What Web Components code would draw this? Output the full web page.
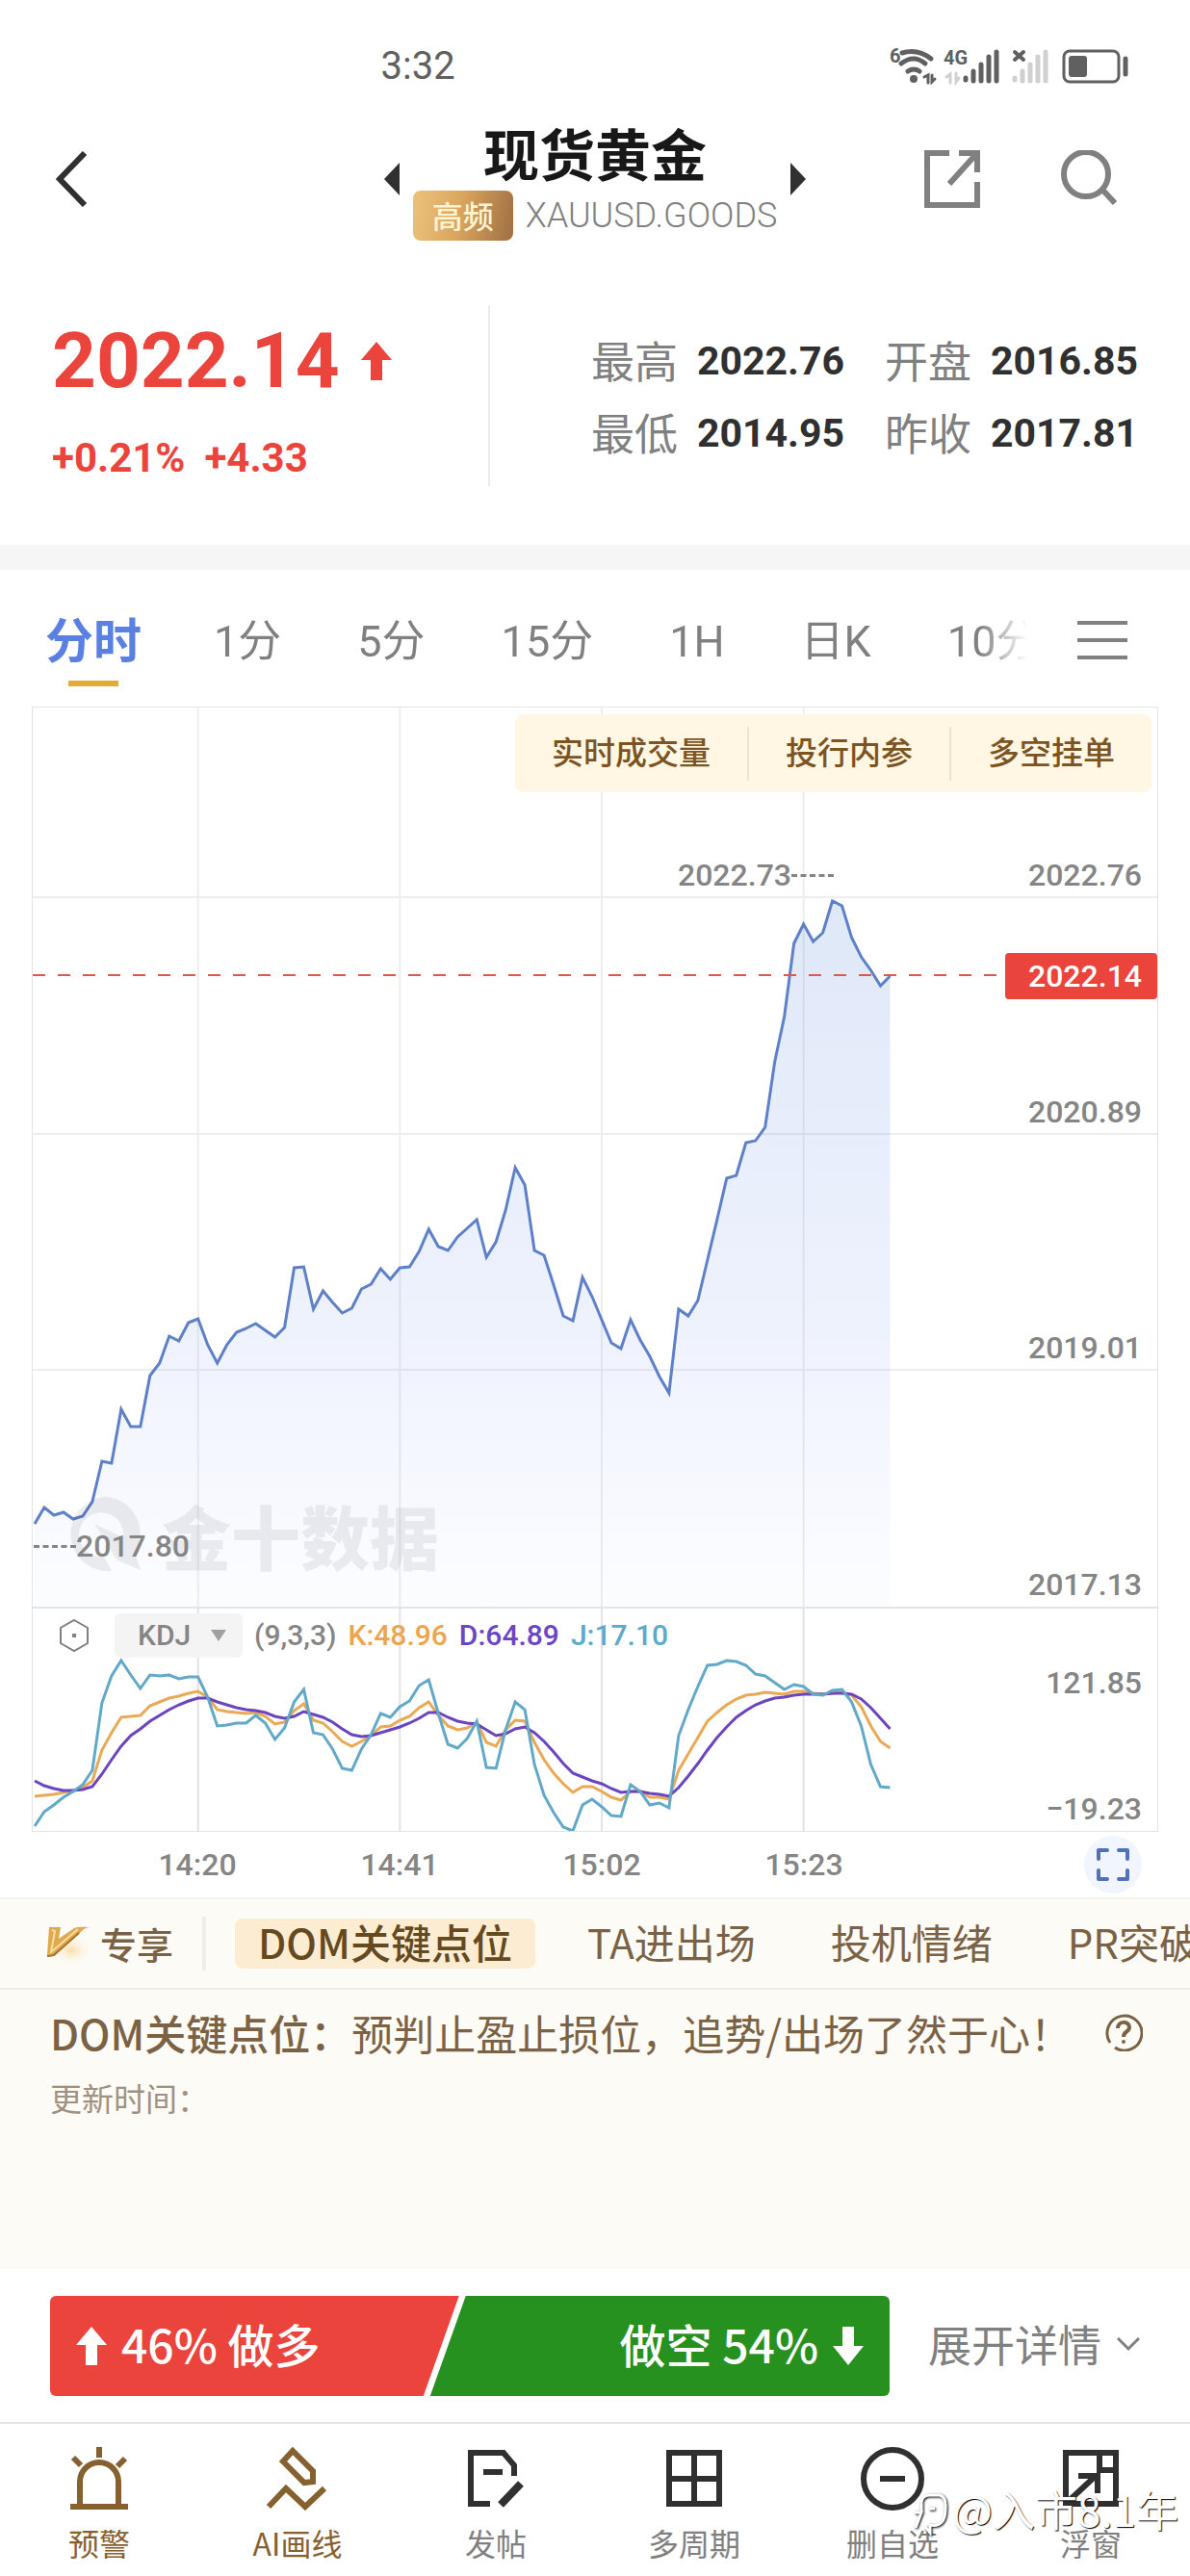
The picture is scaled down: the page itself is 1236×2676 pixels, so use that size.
<!DOCTYPE html>
<html lang="zh-CN">
<head>
<meta charset="UTF-8">
<meta name="viewport" content="width=device-width, initial-scale=1">
<title>现货黄金 XAUUSD.GOODS</title>
<style>
    body {
        margin: 0;
        background: #fff;
        color: #808080;
        font-family: Roboto, "Noto Sans CJK SC", sans-serif;
        --num: Roboto, sans-serif;
        --cjk: "Noto Sans CJK SC", sans-serif;
        --red: #eb443d;
        --green: #27911f;
        --ink: #303030;
        --brown: #86602e;
    }
</style>
</head>
<body>
<quote-page></quote-page>

<script>
const resetCss = `
    * { box-sizing: border-box; }
    button, select { margin: 0; padding: 0; border: 0; background: none; font: inherit; color: inherit; cursor: pointer; }
    svg { display: block; }
`;

// one y per minute, in plot units of the price panel
const prices = [
    848, 831, 839, 836, 843, 840, 825, 783, 785, 729, 747, 747, 694, 681, 653, 658, 639, 635,
    662, 681, 662, 649, 645, 640, 647, 654, 644, 582, 581, 625, 606, 618, 629, 624, 604, 599,
    583, 594, 582, 581, 565, 542, 560, 564, 550, 541, 532, 571, 555, 522, 478, 496, 564, 569,
    600, 632, 637, 592, 612, 636, 660, 666, 636, 657, 674, 695, 712, 625, 632, 616, 574, 532,
    489, 486, 452, 450, 436, 368, 321, 245, 225, 243, 234, 201, 206, 239, 259, 273, 289, 279
];

// KDJ values use a scale three times finer than the panel
const kdj = {
    k: [
        617, 614, 611, 607, 600, 590, 570, 475, 420, 372, 369, 367, 337, 325, 313, 307, 297, 290,
        310, 348, 354, 358, 361, 357, 369, 393, 387, 350, 331, 382, 391, 416, 448, 463, 446, 429,
        402, 400, 382, 368, 343, 323, 367, 400, 412, 406, 387, 450, 461, 412, 382, 384, 450, 503,
        545, 580, 605, 587, 588, 604, 620, 631, 602, 603, 620, 622, 627, 538, 487, 435, 384, 357,
        332, 315, 303, 301, 295, 296, 299, 291, 290, 297, 299, 296, 294, 303, 340, 400, 447, 468
    ],
    d: [
        570, 584, 594, 599, 600, 597, 588, 549, 505, 461, 430, 408, 385, 365, 348, 334, 321, 311,
        311, 323, 334, 342, 349, 351, 356, 369, 375, 368, 355, 364, 373, 387, 408, 426, 431, 430,
        420, 412, 402, 391, 375, 357, 358, 373, 385, 391, 393, 412, 428, 424, 409, 402, 419, 448,
        480, 515, 545, 559, 570, 579, 593, 606, 602, 603, 608, 612, 619, 592, 556, 515, 473, 434,
        401, 373, 350, 333, 321, 312, 308, 303, 299, 299, 299, 297, 296, 300, 314, 343, 376, 407
    ],
    j: [
        711, 667, 645, 620, 602, 583, 536, 328, 243, 196, 240, 282, 239, 244, 241, 251, 246, 246,
        310, 399, 397, 389, 391, 367, 390, 442, 405, 323, 284, 419, 427, 470, 530, 538, 470, 427,
        360, 372, 340, 320, 272, 256, 360, 456, 467, 438, 383, 529, 530, 410, 323, 348, 520, 616,
        670, 713, 727, 644, 628, 651, 677, 682, 583, 602, 644, 639, 655, 428, 348, 277, 209, 207,
        194, 199, 210, 238, 244, 263, 284, 270, 276, 299, 304, 288, 286, 325, 400, 520, 589, 591
    ]
};

const toPoints = (values, scale = (v) => v) =>
    values.map((v, i) => `${2 + i * 10},${scale(v)}`).join(' ');

const kdjPoints = (values) => toPoints(values, (v) => Math.round(v / 3) - 11);

function register(name, html) {
    const template = document.createElement('template');
    template.innerHTML = html.replace('<style>', '<style>' + resetCss);
    customElements.define(name, class extends HTMLElement {
        constructor() {
            super();
            this.attachShadow({mode: 'open'});
            this.shadowRoot.appendChild(template.content.cloneNode(true));
        }
    });
}

register('status-bar', `
<style>
    :host {
        display: flex;
        justify-content: space-between;
        align-items: center;
        height: 120px;
        padding: 16px 63px 0 32%;
        color: #606060;
        font-size: 40px;
    }
    text { font-family: var(--num); font-size: 20px; font-weight: bold; }
</style>
<span>3:32</span>
<svg width="250" height="42" viewBox="924 47 250 42" fill="none" stroke="#606060" stroke-width="5" stroke-linecap="round" aria-hidden="true">
    <text x="925" y="65" fill="#606060" stroke="none">6</text>
    <path d="M938 55q16-5 30 6M937 66q13-10 25 0M944 74q6-4 12 0"/>
    <circle cx="950" cy="82" r="4" fill="#606060" stroke="none"/>
    <path d="M961 80l4-2v8M969 78v7l3-3" stroke-width="3"/>
    <text x="981" y="67" fill="#606060" stroke="none">4G</text>
    <path d="M984 80l4-3v9M994 76v9l3-4" stroke="#d0d0d0" stroke-width="3"/>
    <path d="M1004 81v2M1012 74v10M1020 67v17M1028 59v25M1036 54v30"/>
    <path d="M1055 54l9 8M1064 54l-9 8" stroke-width="4"/>
    <path d="M1055 81v2M1063 74v10M1071 67v17M1079 59v25M1087 54v30" stroke="#d0d0d0"/>
    <rect x="1106" y="53" width="57" height="32" rx="6" stroke-width="3"/>
    <rect x="1111" y="58" width="19" height="22" rx="3" fill="#606060" stroke="none"/>
    <path d="M1170 61v16"/>
</svg>
`);

register('quote-header', `
<style>
    :host {
        display: grid;
        grid-template-columns: 1fr auto 1fr;
        align-items: center;
        height: 166px;
        padding: 0 58px 34px;
    }
    .title { display: flex; align-items: center; gap: 14px; }
    .name { display: grid; justify-items: center; }
    h1 {
        margin: 0;
        padding-bottom: 4px;
        color: #181818;
        font: 700 58px/72px var(--cjk);
    }
    .code { display: flex; align-items: center; gap: 13px; font-size: 36px; font-weight: 300; line-height: 52px; }
    .tag {
        width: 104px;
        height: 52px;
        border-radius: 8px;
        background: linear-gradient(100deg, #edc27c, #dba75f 45%, #a06f42);
        color: #fff3d0;
        font: 500 32px/50px var(--cjk);
        text-align: center;
    }
    .actions { display: flex; justify-content: end; gap: 84px; margin-right: 18px; }
</style>
<button aria-label="返回">
    <svg width="34" height="58" viewBox="0 0 34 58" fill="none" stroke="#303030" stroke-width="6"><path d="M30 2L4 29l26 27"/></svg>
</button>
<div class="title">
    <button aria-label="上一个"><svg width="16" height="34" viewBox="0 0 16 34"><path d="M16 0v34L0 17z" fill="#303030"/></svg></button>
    <div class="name">
        <h1>现货黄金</h1>
        <div class="code"><span class="tag">高频</span>XAUUSD.GOODS</div>
    </div>
    <button aria-label="下一个"><svg width="16" height="34" viewBox="0 0 16 34"><path d="M0 0v34l16-17z" fill="#303030"/></svg></button>
</div>
<div class="actions">
    <button aria-label="分享">
        <svg width="58" height="60" viewBox="0 0 58 60" fill="none" stroke="#808080" stroke-width="6"><path d="M26 3H3v54h52V33M36 3h19v20M26 35L54 4"/></svg>
    </button>
    <button aria-label="搜索">
        <svg width="58" height="60" viewBox="0 0 58 60" fill="none" stroke="#808080" stroke-width="6"><circle cx="26" cy="25" r="23"/><path d="M43 41l13 14"/></svg>
    </button>
</div>
`);

register('quote-summary', `
<style>
    :host {
        display: grid;
        grid-template-columns: 455fr 673fr;
        align-items: start;
        height: 280px;
        padding: 31px 54px 0;
        font-family: var(--num);
    }
    .last { height: 188px; border-right: 2px solid #ebebeb; color: var(--red); font-weight: bold; }
    .price { display: flex; align-items: center; gap: 22px; height: 116px; font-size: 80px; }
    .change { display: flex; gap: 20px; font-size: 42px; line-height: 86px; }
    dl {
        display: grid;
        grid-template-columns: auto auto auto auto;
        grid-auto-rows: 75px;
        justify-content: end;
        align-items: center;
        margin: 0;
        padding-top: 20px;
    }
    dt { font: 400 45px/60px var(--cjk); padding-bottom: 2px; }
    dd { margin: 0 0 0 20px; color: var(--ink); font-size: 41px; font-weight: bold; }
    dd + dt { margin-left: 42px; }
    dt.first { margin-left: 0; }
</style>
<div class="last">
    <div class="price">2022.14
        <svg width="32" height="40" viewBox="0 0 32 40"><path d="M16 0l16 19H22v21H10V19H0z" fill="#eb443d"/></svg>
    </div>
    <div class="change"><span>+0.21%</span><span>+4.33</span></div>
</div>
<dl>
    <dt class="first">最高</dt><dd>2022.76</dd><dt>开盘</dt><dd>2016.85</dd>
    <dt class="first">最低</dt><dd>2014.95</dd><dt>昨收</dt><dd>2017.81</dd>
</dl>
`);

register('period-tab', `
<style>
    :host { flex: none; display: block; }
    button { display: block; height: 64px; font-size: 45px; line-height: 64px; }
    :host([active]) { margin-right: -4px; }
    :host([active]) button { color: #5a80e2; font-size: 50px; font-weight: 700; }
    :host([active])::after {
        content: "";
        display: block;
        width: 52px;
        height: 6px;
        margin: 8px auto 0;
        background: #e1ad38;
    }
</style>
<button><slot></slot></button>
`);

register('period-tabs', `
<style>
    :host {
        display: flex;
        align-items: start;
        height: 143px;
        padding: 43px 65px 0 47px;
    }
    .list {
        flex: 1;
        display: flex;
        gap: 79px;
        margin-right: 52px;
        overflow: hidden;
        -webkit-mask: linear-gradient(to right, #000 calc(100% - 50px), transparent);
        mask: linear-gradient(to right, #000 calc(100% - 50px), transparent);
    }
    .menu { height: 60px; }
</style>
<div class="list">
    <period-tab active>分时</period-tab>
    <period-tab>1分</period-tab>
    <period-tab>5分</period-tab>
    <period-tab>15分</period-tab>
    <period-tab>1H</period-tab>
    <period-tab>日K</period-tab>
    <period-tab>10分</period-tab>
</div>
<button class="menu" aria-label="更多周期">
    <svg width="52" height="42" viewBox="0 0 52 42" stroke="#808080" stroke-width="4"><path d="M0 3h52M0 21h52M0 39h52"/></svg>
</button>
`);

register('chart-tools', `
<style>
    :host {
        display: flex;
        align-items: center;
        height: 81px;
        border-radius: 8px;
        background: #fff6e4;
    }
    button {
        height: 56px;
        padding: 0 38px 6px;
        color: #7c5422;
        font: 500 33px/50px var(--cjk);
    }
    button + button { border-left: 2px solid #efe3cc; }
</style>
<button>实时成交量</button>
<button>投行内参</button>
<button>多空挂单</button>
`);

register('price-chart', `
<style>
    :host { display: grid; position: relative; font: 500 32px/46px var(--num); color: #858585; }
    .plot, .axis { grid-area: 1 / 1; }
    .plot { width: 100%; height: 934px; }
    .plot * { vector-effect: non-scaling-stroke; }
    .axis {
        display: grid;
        grid-template-rows: 197px 246px 245px 246px;
        align-items: end;
        justify-items: end;
        padding-right: 16px;
    }
    chart-tools { position: absolute; top: 7px; right: 6px; }
    .now {
        position: absolute;
        top: 255px;
        right: 0;
        padding-right: 16px;
        width: 158px;
        border-radius: 4px;
        background: var(--red);
        color: #fff;
        line-height: 48px;
        text-align: right;
    }
    .peak, .low { position: absolute; display: flex; align-items: center; }
    .peak { top: 151px; right: 336px; }
    .low { top: 848px; left: 1px; }
    .peak::after, .low::before { content: ""; width: 44px; border-top: 3px dashed #858585; }
    .brand {
        position: absolute;
        top: 809px;
        left: 36px;
        display: flex;
        align-items: center;
        gap: 20px;
        opacity: .07;
        color: #202030;
        font: 900 72px/100px var(--cjk);
    }
</style>
<svg class="plot" viewBox="0 0 1170 934" preserveAspectRatio="none" fill="none" role="img" aria-label="分时走势">
    <defs>
        <linearGradient id="fill" x1="0" y1="0" x2="0" y2="1">
            <stop offset="0" stop-color="#dfe8f8"/>
            <stop offset=".6" stop-color="#eef2fd"/>
            <stop offset="1" stop-color="#fcfdff"/>
        </linearGradient>
    </defs>
    <polygon points="2,934 ${toPoints(prices)} 892,934" fill="url(#fill)"/>
    <path d="M0 197h1170M0 443h1170M0 688h1170M172 0v934M382 0v934M592 0v934M802 0v934" stroke="#505870" stroke-opacity=".1" stroke-width="2"/>
    <polyline points="${toPoints(prices)}" stroke="#5e80c8" stroke-width="3"/>
    <path d="M0 278h1004" stroke="#e2574c" stroke-width="2" stroke-dasharray="13 13"/>
</svg>
<div class="axis">
    <span>2022.76</span><span>2020.89</span><span>2019.01</span><span>2017.13</span>
</div>
<div class="brand">
    <svg width="78" height="78" viewBox="0 0 78 78"><path d="M38 0a38 38 0 0 1 32 58l6 18-24-10L28 28l30 14A23 23 0 1 0 38 62l8 15A38.500 38.500 0 1 1 38 0z" fill="currentColor"/></svg>
    <span>金十数据</span>
</div>
<div class="peak"><span>2022.73</span></div>
<div class="low"><span>2017.80</span></div>
<div class="now">2022.14</div>
<chart-tools></chart-tools>
`);

register('kdj-chart', `
<style>
    :host { display: grid; border-top: 2px solid #e2e4e8; font: 500 32px/46px var(--num); color: #858585; }
    .plot, .head, .axis { grid-area: 1 / 1; }
    .plot { width: 100%; height: 231px; }
    .plot * { vector-effect: non-scaling-stroke; }
    .head { display: flex; align-items: center; align-self: start; gap: 12px; padding: 5px 0 0 27px; font-size: 30px; }
    .pick { position: relative; margin-left: 14px; }
    select {
        appearance: none;
        width: 133px;
        height: 46px;
        padding-left: 24px;
        border-radius: 6px;
        background: #f4f4f4;
    }
    .pick svg { position: absolute; right: 17px; top: 17px; pointer-events: none; }
    .k { color: #eba64d; }
    .d { color: #6b45c4; }
    .j { color: #5ba9cb; }
    .axis { display: grid; align-content: space-between; justify-items: end; padding: 54px 16px 0 0; }
</style>
<svg class="plot" viewBox="0 0 1170 231" preserveAspectRatio="none" fill="none" stroke-width="3" role="img" aria-label="KDJ">
    <path d="M172 0v231M382 0v231M592 0v231M802 0v231" stroke="#e2e2e6" stroke-width="2"/>
    <polyline points="${kdjPoints(kdj.k)}" stroke="#e9a955"/>
    <polyline points="${kdjPoints(kdj.d)}" stroke="#6b45c0"/>
    <polyline points="${kdjPoints(kdj.j)}" stroke="#62a8c8"/>
</svg>
<div class="head">
    <button aria-label="指标设置">
        <svg width="32" height="36" viewBox="0 0 32 36" fill="none" stroke="#808080" stroke-width="2"><path d="M16 2l14 8v16l-14 8-14-8V10z"/><path d="M14 18h4" stroke-width="4"/></svg>
    </button>
    <div class="pick">
        <select aria-label="指标"><option>KDJ</option><option>MACD</option><option>RSI</option></select>
        <svg width="16" height="12" viewBox="0 0 16 12"><path d="M0 0h16L8 12z" fill="#a0a0a0"/></svg>
    </div>
    <span>(9,3,3)</span>
    <span class="k">K:48.96</span>
    <span class="d">D:64.89</span>
    <span class="j">J:17.10</span>
</div>
<div class="axis"><span>121.85</span><span>−19.23</span></div>
`);

register('time-axis', `
<style>
    :host {
        display: grid;
        grid-template-columns: 67fr 210fr 210fr 210fr 210fr 263fr;
        align-items: center;
        height: 68px;
        font: 500 32px/46px var(--num);
        color: #858585;
        text-align: center;
    }
    time:first-of-type { grid-column: 2; }
    button {
        display: grid;
        place-items: center;
        justify-self: end;
        width: 60px;
        height: 60px;
        margin-right: 17px;
        border-radius: 50%;
        background: #f0f5fe;
    }
</style>
<time>14:20</time><time>14:41</time><time>15:02</time><time>15:23</time>
<button aria-label="全屏">
    <svg width="34" height="34" viewBox="0 0 34 34" fill="none" stroke="#5272b8" stroke-width="4" stroke-linecap="round" stroke-linejoin="round"><path d="M2 11V2h9M23 2h9v9M32 23v9h-9M11 32H2v-9"/></svg>
</button>
`);

register('chart-card', `
<style>
    :host { display: block; margin: -1px 33px 0; }
    .frame { border: 1px solid #e2e4e8; }
</style>
<div class="frame">
    <price-chart></price-chart>
    <kdj-chart></kdj-chart>
</div>
<time-axis></time-axis>
`);

register('vip-tab', `
<style>
    :host { flex: none; display: block; border-radius: 8px; }
    :host([active]) { background: #fcedd2; color: #65491f; font-weight: 500; margin-right: -24px; }
    button { display: block; height: 52px; padding-bottom: 4px; line-height: 48px; }
    :host([active]) button { padding: 0 24px 4px; }
</style>
<button><slot></slot></button>
`);

register('vip-panel', `
<style>
    :host {
        display: block;
        height: 386px;
        border-top: 2px solid #f4f3ee;
        background: #fcfbf6;
        color: #7b6244;
        font: 400 43px/52px var(--cjk);
    }
    nav {
        display: flex;
        align-items: center;
        gap: 78px;
        height: 94px;
        padding-left: 46px;
        border-bottom: 2px solid #efede4;
        overflow: hidden;
        font-size: 42px;
    }
    .mark {
        flex: none;
        display: flex;
        align-items: center;
        gap: 8px;
        margin-right: -48px;
        padding-right: 30px;
        border-right: 4px solid #f1ece8;
        font-size: 38px;
        font-weight: 500;
        line-height: 56px;
    }
    .info { display: flex; justify-content: space-between; align-items: center; padding: 18px 49px 0 52px; }
    p { margin: 0; }
    b { font-weight: 500; }
    .time { padding: 20px 52px; color: #a19180; font-size: 33px; line-height: 44px; }
</style>
<nav>
    <div class="mark">
        <svg width="50" height="46" viewBox="0 0 50 46">
            <defs><radialGradient id="glow"><stop offset="0" stop-color="#fbdca8"/><stop offset="1" stop-color="#fcfbf6" stop-opacity="0"/></radialGradient></defs>
            <ellipse cx="28" cy="30" rx="22" ry="16" fill="url(#glow)"/>
            <path d="M5 6h12l-2 12L31 7q4-2 17-1-6 0-10 5L9 36q-5 2-6-1z" fill="#dfa94d"/>
            <path d="M8 9l3 1-4 22L35 8" fill="none" stroke="#f7dca4" stroke-width="2"/>
            <path d="M3 36l7-1L36 12" fill="none" stroke="#a9732c" stroke-width="2"/>
        </svg>
        专享
    </div>
    <vip-tab active>DOM关键点位</vip-tab>
    <vip-tab>TA进出场</vip-tab>
    <vip-tab>投机情绪</vip-tab>
    <vip-tab>PR突破</vip-tab>
</nav>
<div class="info">
    <p><b>DOM关键点位：</b>预判止盈止损位，追势/出场了然于心！</p>
    <button aria-label="说明">
        <svg width="40" height="40" viewBox="0 0 40 40" fill="none" stroke="#7b6244" stroke-width="3"><path d="M11 36a18 18 0 1 0-5-5"/><path d="M14 16c0-8 12-8 12-1 0 5-6 4-6 10" stroke-width="4"/><circle cx="20" cy="30" r="1" stroke-width="2"/></svg>
    </button>
</div>
<p class="time">更新时间：</p>
`);

register('vote-bar', `
<style>
    :host { display: flex; align-items: center; gap: 40px; padding: 28px 52px 27px; font: 500 48px/98px var(--cjk); }
    .bar { flex: 871; display: flex; height: 104px; border-radius: 6px; overflow: hidden; color: #fff; }
    .bar button { display: flex; align-items: center; gap: 15px; padding: 0 27px 6px; }
    .long { flex: 424; background: var(--red); clip-path: polygon(0 0, 100% 0, calc(100% - 37px) 100%, 0 100%); }
    .short { flex: 484; justify-content: end; margin-left: -30px; background: var(--green); clip-path: polygon(37px 0, 100% 0, 100% 100%, 0 100%); }
    .bar svg { margin-top: 6px; }
    .more { display: flex; align-items: center; gap: 16px; padding-bottom: 4px; font-size: 45px; font-weight: 400; }
</style>
<div class="bar">
    <button class="long">
        <svg width="32" height="40" viewBox="0 0 32 40"><path d="M16 0l16 19H22v21H10V19H0z" fill="#fff"/></svg>
        46% 做多
    </button>
    <button class="short">
        做空 54%
        <svg width="32" height="40" viewBox="0 0 32 40"><path d="M16 40l16-20H22V0H10v20H0z" fill="#fff"/></svg>
    </button>
</div>
<button class="more">展开详情
    <svg width="24" height="16" viewBox="0 0 24 16" fill="none" stroke="#808080" stroke-width="3"><path d="M1 2l11 11L23 2"/></svg>
</button>
`);

register('nav-item', `
<style>
    :host { flex: 1; display: grid; color: var(--ink); }
    :host([gold]) { color: var(--brown); }
    button {
        display: grid;
        justify-items: center;
        align-content: start;
        gap: 9px;
        padding-top: 24px;
        font: 400 32px/48px var(--cjk);
    }
    .label { color: #808080; }
    :host([gold]) .label { color: var(--brown); }
    ::slotted(svg) { display: block; width: 66px; height: 66px; fill: none; stroke: currentColor; stroke-width: 6px; }
</style>
<button><slot name="icon"></slot><span class="label"><slot></slot></span></button>
`);

register('bottom-nav', `
<style>
    :host { display: flex; position: relative; height: 160px; border-top: 2px solid #e4e4e4; }
    .mark {
        position: absolute;
        top: 60px;
        right: 12px;
        display: flex;
        align-items: center;
        gap: 4px;
        color: #fff;
        font: 400 44px/52px var(--cjk);
        text-shadow: 1px 1px 1px #000;
        pointer-events: none;
    }
    .mark svg { filter: drop-shadow(1px 1px 1px #000); margin-top: 12px; }
</style>
<nav-item gold>
    <svg slot="icon" viewBox="0 0 66 66"><path d="M33 0v11M6 11l8 8M60 12l-8 8M13 59V36a20 20 0 0 1 40 0v23M3 62h60"/></svg>预警
</nav-item>
<nav-item gold>
    <svg slot="icon" viewBox="0 0 66 66"><path d="M28 4L18 15l22 22 9-1V25zM3 62l18-19 20 19 20-19"/></svg>AI画线
</nav-item>
<nav-item>
    <svg slot="icon" viewBox="0 0 66 66"><path d="M27 59H7V6h34l11 13v11M20 26h20"/><path d="M38 60l21-22" stroke-width="8"/></svg>发帖
</nav-item>
<nav-item>
    <svg slot="icon" viewBox="0 0 66 66"><path d="M7 6h52v53H7zM33 6v53M7 33h52"/></svg>多周期
</nav-item>
<nav-item>
    <svg slot="icon" viewBox="0 0 66 66"><circle cx="33" cy="33" r="30"/><path d="M20 33h26"/></svg>删自选
</nav-item>
<nav-item>
    <svg slot="icon" viewBox="0 0 66 66"><path d="M7 6h52v53H7zM42 6v18h17M20 30h20v18M10 56l28-26"/></svg>浮窗
</nav-item>
<div class="mark">
    <svg width="38" height="44" viewBox="0 0 38 44" fill="none" stroke="#fff" stroke-width="3"><path d="M4 36l6-16H3M10 20V9q1-7 9-7h10q7 2 6 14 0 20-16 17v8l-5-6M18 16h6"/></svg>
    <span>@入市8.1年</span>
</div>
`);

register('quote-page', `
<style>
    :host { display: block; overflow: hidden; }
    .band { height: 26px; background: #f6f6f6; }
</style>
<status-bar></status-bar>
<quote-header></quote-header>
<quote-summary></quote-summary>
<div class="band"></div>
<period-tabs></period-tabs>
<chart-card></chart-card>
<vip-panel></vip-panel>
<vote-bar></vote-bar>
<bottom-nav></bottom-nav>
`);
</script>
</body>
</html>
